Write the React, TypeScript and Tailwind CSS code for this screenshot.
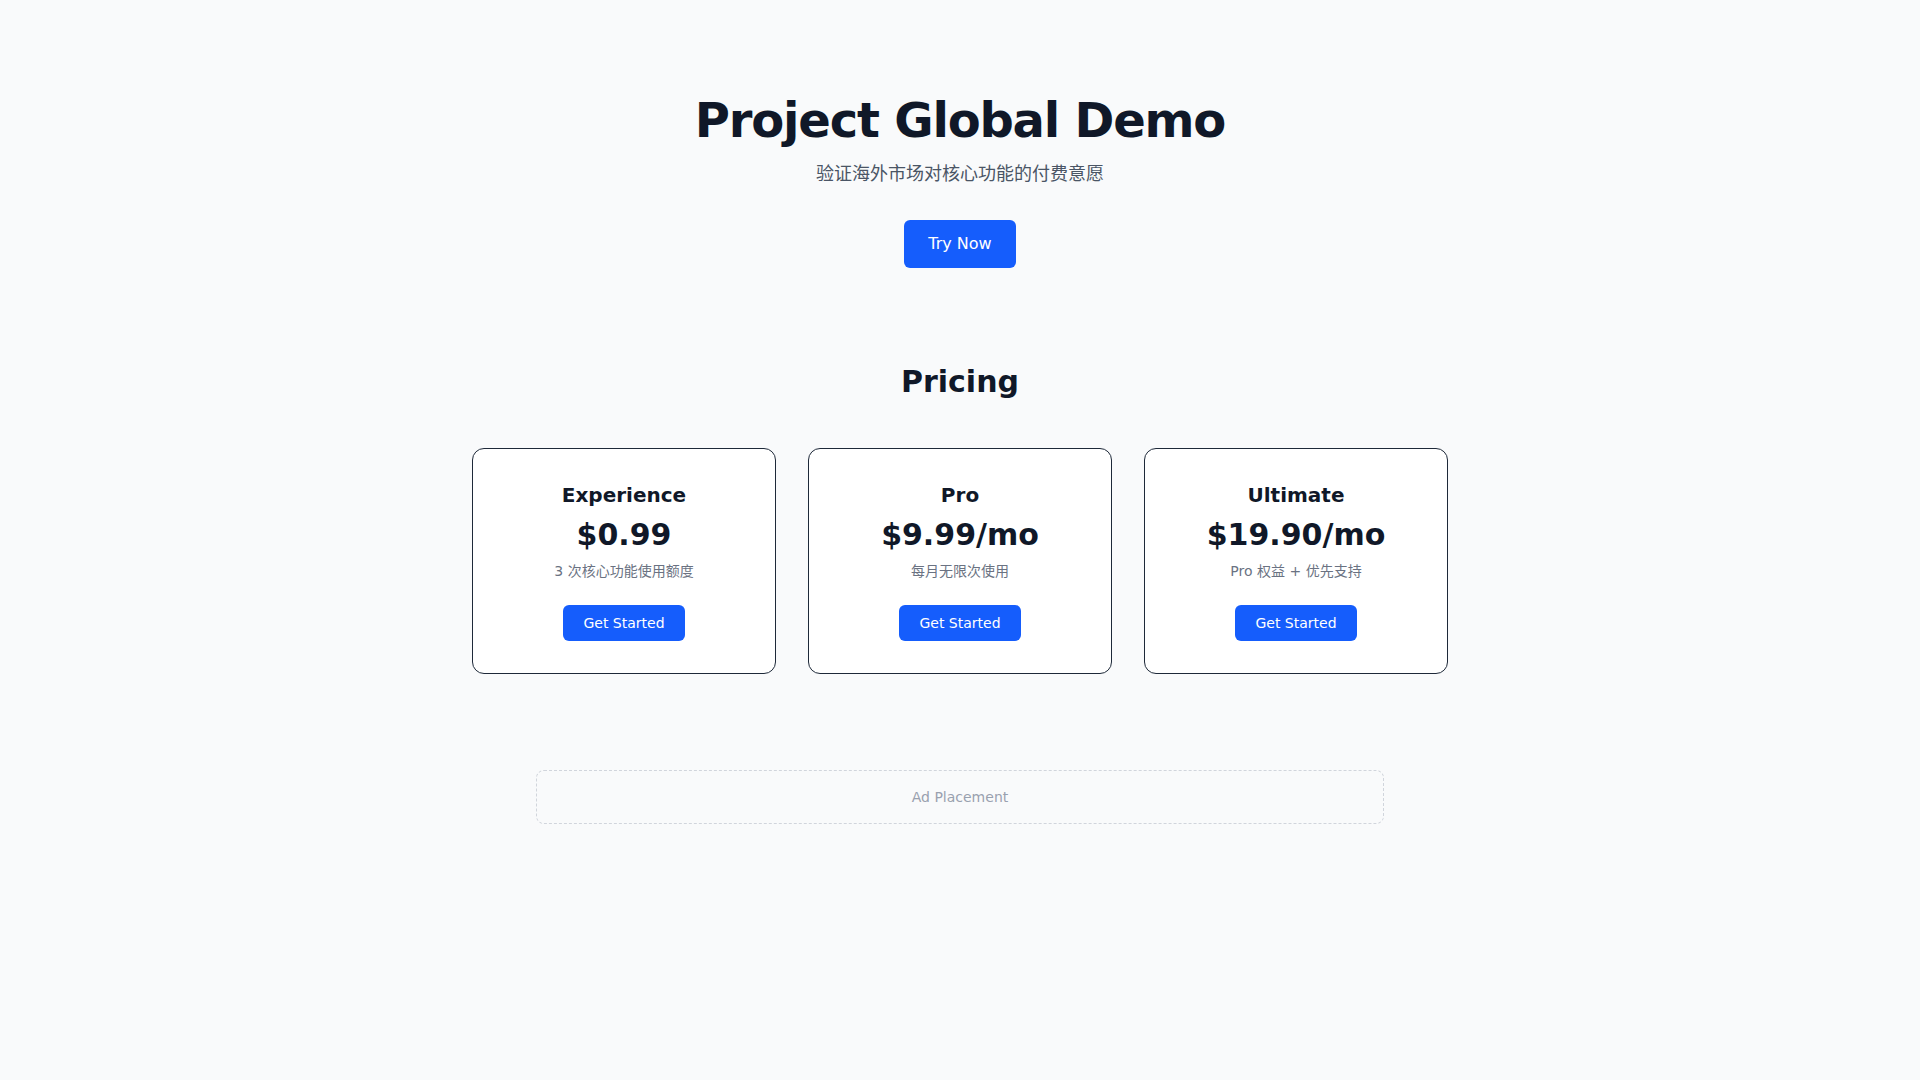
import React from "react";

const plans = [
  { name: "Experience", price: "$0.99", desc: "3 次核心功能使用额度" },
  { name: "Pro", price: "$9.99/mo", desc: "每月无限次使用" },
  { name: "Ultimate", price: "$19.90/mo", desc: "Pro 权益 + 优先支持" },
];

export default function App() {
  return (
    <div
      className="min-h-screen bg-gray-50 text-gray-900"
      style={{ fontFamily: '"DejaVu Sans", "Noto Sans CJK SC", sans-serif' }}
    >
      <main className="pt-24 pb-24">
        <section className="flex flex-col items-center text-center">
          <h1 className="text-5xl leading-none font-bold tracking-tight text-gray-900">
            Project Global Demo
          </h1>
          <p className="mt-4 text-lg text-gray-600">验证海外市场对核心功能的付费意愿</p>
          <button className="mt-8 rounded-md bg-blue-600 px-6 py-3 text-base text-white">
            Try Now
          </button>
        </section>

        <section className="mx-auto mt-24 max-w-5xl px-6">
          <h2 className="text-center text-3xl font-bold text-gray-900">Pricing</h2>
          <div className="mt-12 grid grid-cols-3 gap-8">
            {plans.map((p) => (
              <div
                key={p.name}
                className="flex flex-col items-center rounded-xl border border-gray-800 bg-white p-8 text-center"
              >
                <h3 className="text-xl font-semibold text-gray-900">{p.name}</h3>
                <div className="mt-2 text-3xl font-bold text-gray-900">{p.price}</div>
                <p className="mt-2 text-sm text-gray-500">{p.desc}</p>
                <button className="mt-6 rounded-md bg-blue-600 px-5 py-2 text-sm text-white">
                  Get Started
                </button>
              </div>
            ))}
          </div>
        </section>

        <section className="mx-auto mt-24 max-w-4xl px-6">
          <div className="rounded-lg border border-dashed border-gray-300 py-4 text-center text-sm text-gray-400">
            Ad Placement
          </div>
        </section>
      </main>
    </div>
  );
}
